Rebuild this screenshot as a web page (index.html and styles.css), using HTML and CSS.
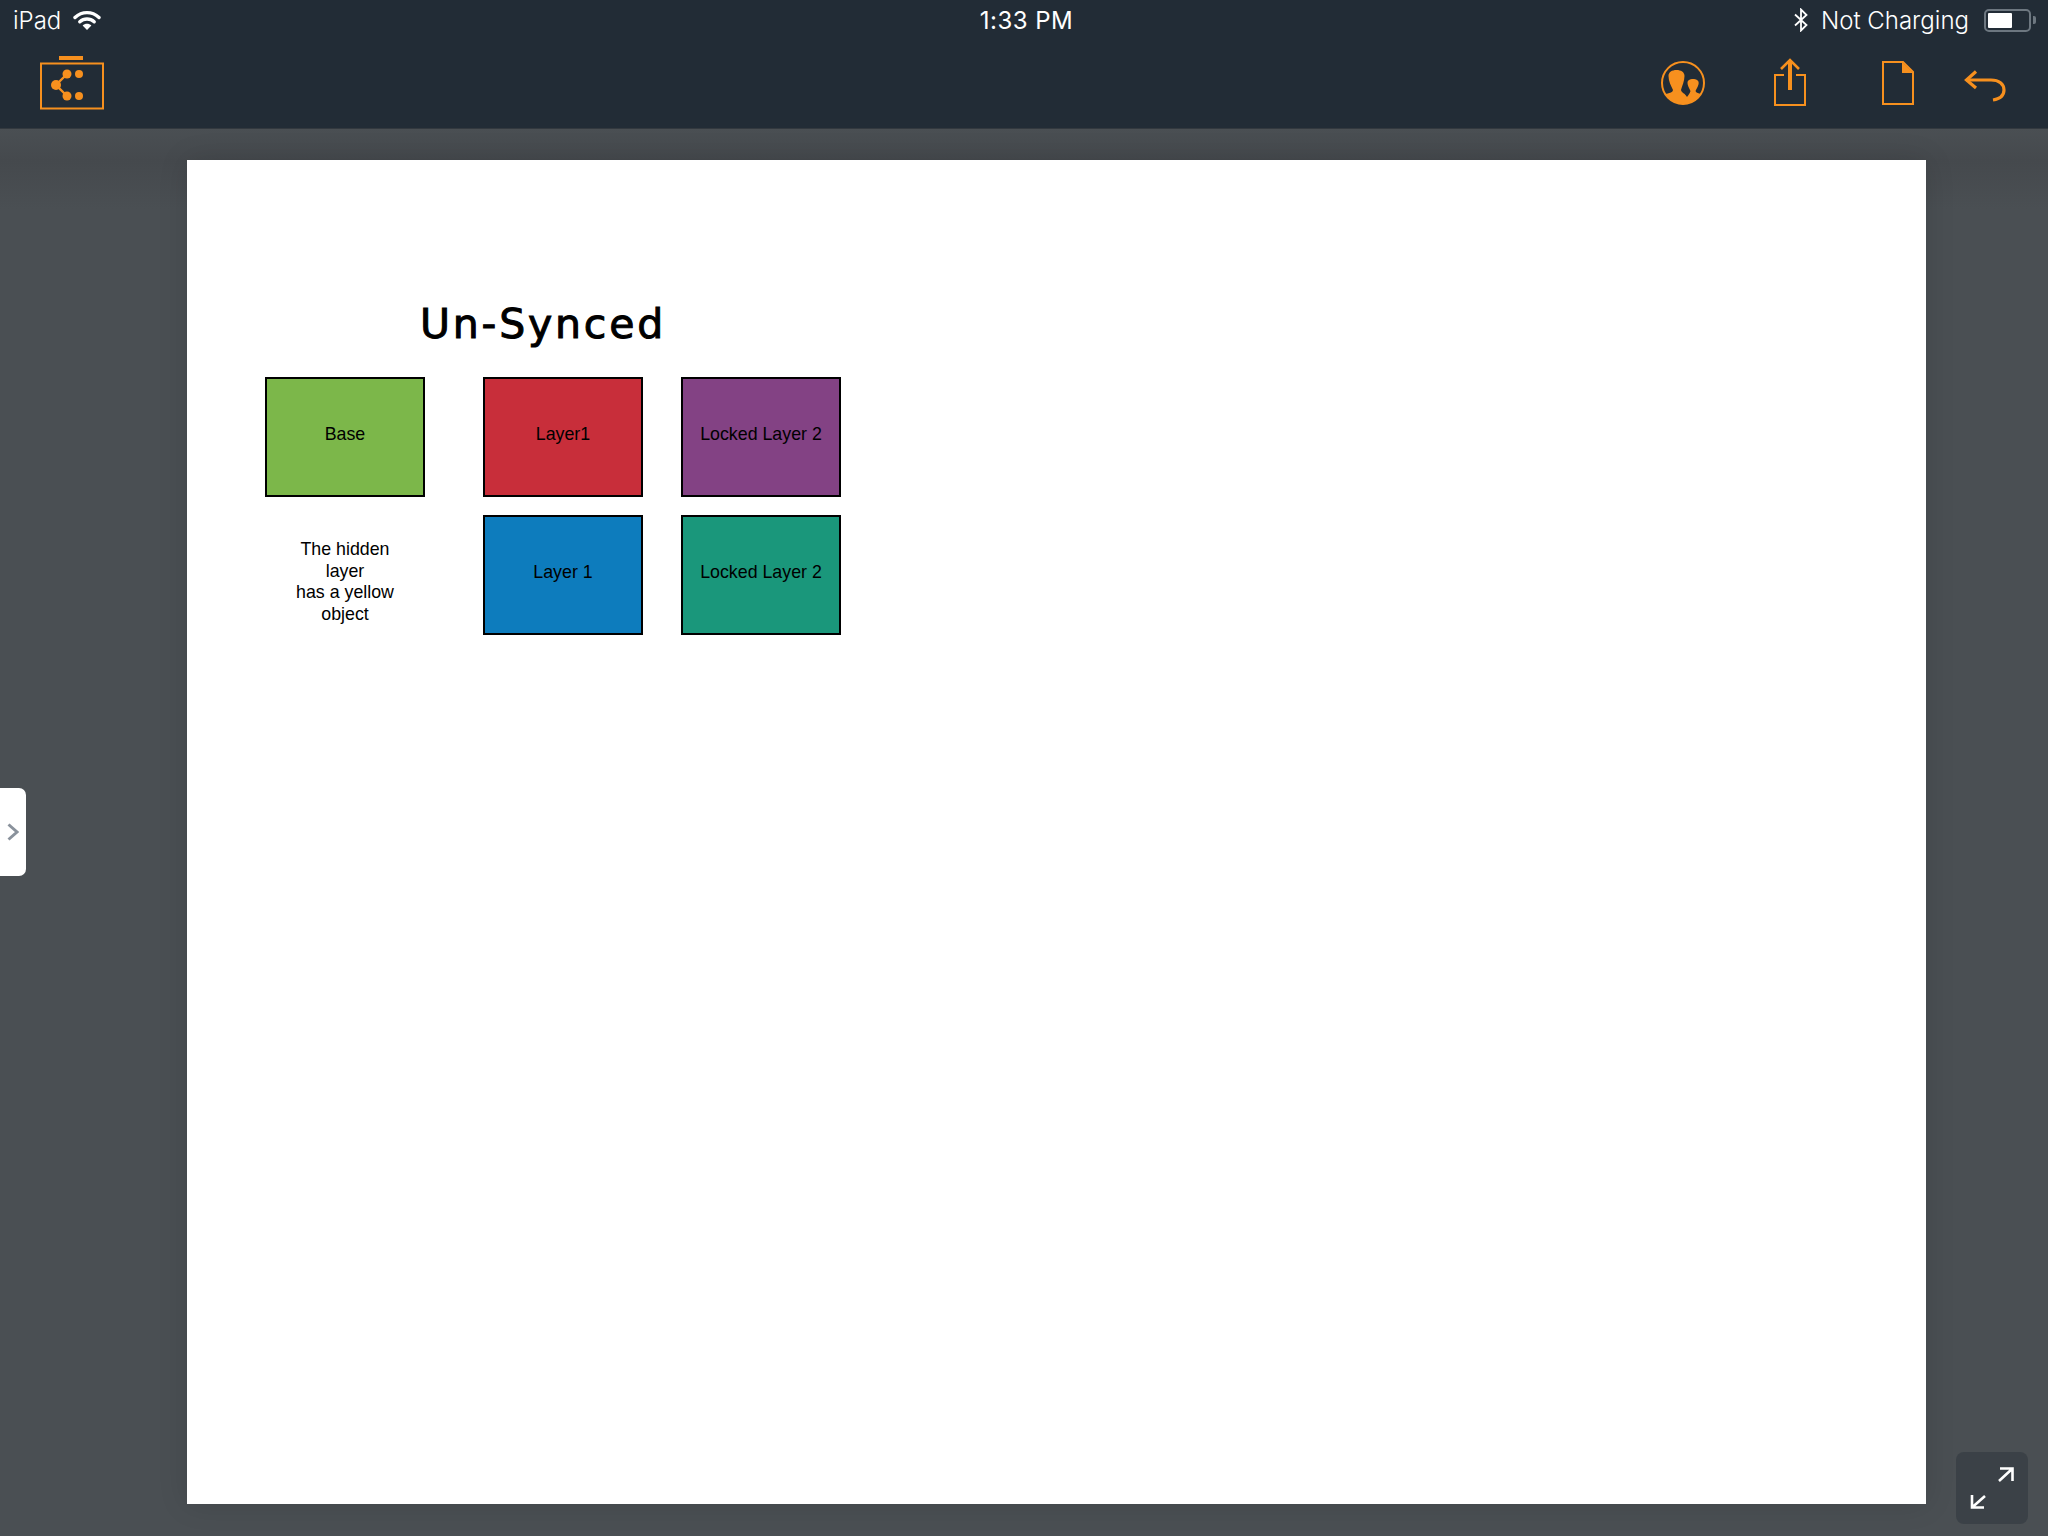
FILE: index.html
```html
<!DOCTYPE html>
<html lang="en">
<head>
  <meta charset="UTF-8">
  <title>Un-Synced</title>
  <link rel="stylesheet" href="styles.css">
</head>
<body>
  <header class="app-header">
    <div class="status-bar">
      <div class="status-left">
        <span>iPad</span>
        <svg class="wifi" width="28" height="20" viewBox="0 0 28 20">
          <path d="M2 7.500C9 1 19 1 26 7.500" fill="none" stroke="#fff" stroke-width="3.400" stroke-linecap="round"/>
          <path d="M6.800 11.800C11 8 17 8 21.200 11.800" fill="none" stroke="#fff" stroke-width="3.400" stroke-linecap="round"/>
          <path d="M9.600 15.600C12 13.200 16 13.200 18.400 15.600L14 20Z" fill="#fff"/>
        </svg>
      </div>
      <div class="status-time">1:33 PM</div>
      <div class="status-right">
        <svg class="bluetooth" width="14" height="24" viewBox="0 0 14 24">
          <path d="M1 6.500L12.500 17L7 22.500V1.500L12.500 7L1 17.500" fill="none" stroke="#fff" stroke-width="1.800"/>
        </svg>
        <span class="charging">Not Charging</span>
        <div class="battery"><div class="battery-level"></div></div>
        <div class="battery-nub"></div>
      </div>
    </div>
    <div class="toolbar">
      <svg class="tool-layers" width="64" height="54" viewBox="0 0 64 54">
        <rect x="19" y="0" width="24" height="4" fill="#f7901e"/>
        <rect x="1" y="7.500" width="62" height="45" fill="none" stroke="#f7901e" stroke-width="2"/>
        <path d="M27 18L16 29L27 40" fill="none" stroke="#f7901e" stroke-width="2.400"/>
        <circle cx="16" cy="29" r="5" fill="#f7901e"/>
        <circle cx="27" cy="18" r="4.500" fill="#f7901e"/>
        <circle cx="27" cy="40" r="4.500" fill="#f7901e"/>
        <circle cx="39" cy="18" r="4" fill="#f7901e"/>
        <circle cx="39" cy="40" r="4" fill="#f7901e"/>
      </svg>
      <div class="toolbar-right">
        <svg class="tool-users" width="46" height="46" viewBox="0 0 46 46">
          <circle cx="23" cy="23" r="21" fill="none" stroke="#f7901e" stroke-width="2"/>
          <path d="M5.100 34C9 33 12.500 33 13 30C11 26 8.500 21 8.500 16C8.500 12 12 10 16.500 10C21 10 24.500 12 24.500 16C24.500 21 22 26 21 30C21.500 33 25 33 27 37C28.500 35 30 33 30.500 31C29 28 27.500 25 27.500 23C27.500 20 30 19 33 19C36 19 38.700 20 38.700 23C38.700 25 37 28 35.500 31C36 33 39 33.500 40.900 34A21 21 0 0 1 5.100 34Z" fill="#f7901e"/>
        </svg>
        <svg class="tool-share" width="34" height="48" viewBox="0 0 34 48">
          <path d="M11 17H2V47H32V17H23" fill="none" stroke="#f7901e" stroke-width="2"/>
          <path d="M17 32V3" fill="none" stroke="#f7901e" stroke-width="4"/>
          <path d="M8 11L17 2L26 11" fill="none" stroke="#f7901e" stroke-width="2.600"/>
        </svg>
        <svg class="tool-doc" width="32" height="44" viewBox="0 0 32 44">
          <path d="M1 1H21L31 11V43H1Z" fill="none" stroke="#f7901e" stroke-width="2"/>
          <path d="M20 1L31 12H20Z" fill="#f7901e"/>
        </svg>
        <svg class="tool-undo" width="42" height="32" viewBox="0 0 42 32">
          <path d="M2 10H27C35 10 40 14 40 20C40 26 35 29 29 30" fill="none" stroke="#f7901e" stroke-width="3.200"/>
          <path d="M12 1.500L2.500 10L12 18" fill="none" stroke="#f7901e" stroke-width="3.200"/>
        </svg>
      </div>
    </div>
  </header>

  <main class="workspace">
    <section class="sheet">
      <h1 class="sheet-title">Un-Synced</h1>
      <div class="layer-grid">
        <div class="layer layer-base">Base</div>
        <div class="layer layer-red">Layer1</div>
        <div class="layer layer-purple">Locked Layer 2</div>
        <div class="layer layer-note">The hidden<br>layer<br>has a yellow<br>object</div>
        <div class="layer layer-blue">Layer 1</div>
        <div class="layer layer-teal">Locked Layer 2</div>
      </div>
    </section>
  </main>

  <div class="side-tab">
    <svg width="12" height="20" viewBox="0 0 12 20">
      <path d="M1.500 2.500L10 10L1.500 17.500" fill="none" stroke="#8a929c" stroke-width="3"/>
    </svg>
  </div>

  <div class="expand-btn">
    <svg width="44" height="44" viewBox="0 0 44 44">
      <path d="M29 15L42 3M30 2.500H42.500V15" fill="none" stroke="#fff" stroke-width="2.600"/>
      <path d="M15 30L2 41.500M2 29V41.500H14" fill="none" stroke="#fff" stroke-width="2.600"/>
    </svg>
  </div>
</body>
</html>
```

FILE: styles.css
```css
html, body {
  height: 100%;
}
body {
  margin: 0;
  width: 2048px;
  height: 1536px;
  overflow: hidden;
  position: relative;
  display: flex;
  flex-direction: column;
  font-family: "Liberation Sans", sans-serif;
  background: #4a4f53;
}

/* header */
.app-header {
  height: 129px;
  background: #222c36;
  border-bottom: 1px solid #33393f;
  box-sizing: border-box;
  color: #fff;
  font-family: Inter, "Liberation Sans", sans-serif;
}
.status-bar {
  height: 40px;
  display: grid;
  grid-template-columns: 1fr auto 1fr;
  align-items: center;
  padding: 0 11px 0 13px;
  font-size: 24px;
  font-weight: 300;
}
.status-left {
  display: flex;
  align-items: center;
  gap: 12px;
}
.status-time {
  font-weight: 400;
  letter-spacing: 0.5px;
  margin-left: 3px;
}
.status-right {
  display: flex;
  align-items: center;
  justify-content: flex-end;
  transform: translateX(-1px);
}
.charging {
  margin-left: 13px;
  margin-right: 15px;
}
.battery {
  width: 47px;
  height: 23px;
  box-sizing: border-box;
  border: 2px solid #6d7780;
  border-radius: 5px;
  padding: 2px;
}
.battery-level {
  width: 24px;
  height: 15px;
  background: #fff;
  border-radius: 1px;
}
.battery-nub {
  width: 3px;
  height: 8px;
  margin-left: 2px;
  background: #6d7780;
  border-radius: 0 2px 2px 0;
}
.toolbar {
  height: 88px;
  display: flex;
  justify-content: space-between;
  align-items: flex-start;
  padding: 16px 42px 0 40px;
}
.toolbar-right {
  display: flex;
  align-items: flex-start;
}
.tool-users {
  margin-top: 4px;
}
.tool-share {
  margin-left: 67px;
  margin-top: 2px;
}
.tool-doc {
  margin-left: 75px;
  margin-top: 5px;
}
.tool-undo {
  margin-left: 50px;
  margin-top: 14px;
}

/* workspace and sheet */
.workspace {
  flex: 1;
  padding: 31px 122px 32px 187px;
  background: linear-gradient(#4a4f53, #45494d 32px, #4a4f53 80px);
}
.sheet {
  height: 100%;
  box-sizing: border-box;
  background: #fff;
  padding: 140px 0 0 78px;
  box-shadow: 0 0 28px rgba(0, 0, 0, 0.12);
}
.sheet-title {
  margin: 0 0 29px 155px;
  font-family: "DejaVu Sans", sans-serif;
  font-size: 41px;
  font-weight: 400;
  line-height: 48px;
  color: #000;
  letter-spacing: 2.800px;
  -webkit-text-stroke: 1px #000;
}
.layer-grid {
  display: grid;
  grid-template-columns: 160px 58px 160px 38px 160px;
  grid-template-rows: 120px 120px;
  row-gap: 18px;
  width: 576px;
}
.layer {
  box-sizing: border-box;
  border: 2px solid #000;
  padding-bottom: 4px;
  display: flex;
  align-items: center;
  justify-content: center;
  text-align: center;
  font-size: 17.800px;
  line-height: 21.500px;
  color: #000;
}
.layer-base { grid-column: 1; background: #7cb74a; }
.layer-red { grid-column: 3; background: #c82e3a; }
.layer-purple { grid-column: 5; background: #834284; }
.layer-note { grid-column: 1; border: none; padding: 14px 0 0; }
.layer-blue { grid-column: 3; background: #0d7cbd; }
.layer-teal { grid-column: 5; background: #1a977b; }

/* overlays */
.side-tab {
  position: absolute;
  left: 0;
  top: 788px;
  width: 26px;
  height: 88px;
  box-sizing: border-box;
  background: #fff;
  border-radius: 0 7px 7px 0;
  display: flex;
  align-items: center;
  justify-content: flex-end;
  padding-right: 7px;
}
.expand-btn {
  position: absolute;
  left: 1956px;
  top: 1452px;
  width: 72px;
  height: 72px;
  background: #3b4147;
  border-radius: 8px;
  display: flex;
  align-items: center;
  justify-content: center;
}
```
